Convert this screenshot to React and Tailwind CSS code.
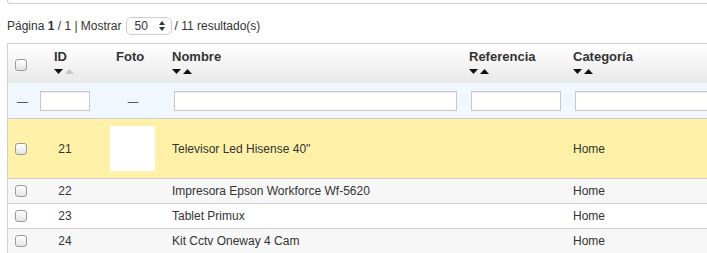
import React from "react";

const GRID = "grid grid-cols-[28px_62px_68px_297px_104px_240px]";

function Check() {
  return (
    <span className="block w-[12px] h-[12px] rounded-[3px] border border-[#9a9a9a] bg-gradient-to-b from-white to-[#e4e4e4] shadow-[inset_0_1px_0_#fff]" />
  );
}

function Arrows({ upLight }) {
  return (
    <svg width="22" height="5" viewBox="0 0 22 5" className="block">
      <polygon points="0,0 9,0 4.5,5" fill="#111" />
      <polygon points="11,5 20,5 15.5,0" fill={upLight ? "#c8c8c8" : "#111"} />
    </svg>
  );
}

function Head({ label, upLight, pl }) {
  return (
    <div className={`pt-[5px] ${pl}`}>
      <div className="font-bold text-[13px] leading-[15px] text-[#333]">{label}</div>
      <div className="mt-[5px]">
        <Arrows upLight={upLight} />
      </div>
    </div>
  );
}

function Input({ w }) {
  return (
    <div className={`h-[20px] ${w} bg-white border border-[#c8c8c8] shadow-[inset_0_1px_1px_rgba(0,0,0,0.08)]`} />
  );
}

const rows = [
  { id: 22, name: "Impresora Epson Workforce Wf-5620", bg: "bg-[#f7f7f7]" },
  { id: 23, name: "Tablet Primux", bg: "bg-white" },
  { id: 24, name: "Kit Cctv Oneway 4 Cam", bg: "bg-[#f7f7f7]" },
];

export default function App() {
  return (
    <div
      className="w-[707px] h-[253px] overflow-hidden bg-white text-[#333] text-[12px]"
      style={{ fontFamily: '"Liberation Sans", Arial, sans-serif' }}
    >
      <div className="ml-[7px] h-[4px] border-l border-b border-[#cfcfcf] rounded-bl-[3px]" />
      <div className="ml-[7px] mt-[13px] h-[18px] flex items-center whitespace-nowrap">
        <span>
          Página <b>1</b> / 1 | Mostrar
        </span>
        <span className="ml-[4px] w-[46px] h-[18px] rounded-[5px] border border-[#cdcdcd] bg-white flex items-center pl-[8px] pr-[6px] justify-between">
          <span>50</span>
          <svg width="6" height="10" viewBox="0 0 6 10">
            <polygon points="0,4 6,4 3,0" fill="#333" />
            <polygon points="0,6 6,6 3,10" fill="#333" />
          </svg>
        </span>
        <span className="ml-[3px]">/ 11 resultado(s)</span>
      </div>

      <div className="ml-[7px] mt-[8px] w-[810px] border-l border-t border-[#cfcfcf]">
        {/* header */}
        <div className={`${GRID} h-[39px] bg-gradient-to-b from-white to-[#e9e9e9]`}>
          <div className="pl-[7px] pt-[15px]">
            <Check />
          </div>
          <Head label="ID" upLight pl="pl-[18px]" />
          <div className="pt-[5px] pl-[18px] font-bold text-[13px] leading-[15px]">Foto</div>
          <Head label="Nombre" pl="pl-[6px]" />
          <Head label="Referencia" pl="pl-[6px]" />
          <Head label="Categoría" pl="pl-[6px]" />
        </div>
        {/* filter */}
        <div className={`${GRID} h-[36px] bg-[#f0f7ff] border-b border-[#cfcfcf]`}>
          <div className="flex justify-center pt-[12px] pl-[1px] leading-[12px] text-[11px]">—</div>
          <div className="pl-[4px] pt-[8px]">
            <Input w="w-[50px]" />
          </div>
          <div className="flex justify-center pt-[12px] pl-[2px] leading-[12px] text-[11px]">—</div>
          <div className="pl-[8px] pt-[8px]">
            <Input w="w-[283px]" />
          </div>
          <div className="pl-[8px] pt-[8px]">
            <Input w="w-[90px]" />
          </div>
          <div className="pl-[8px] pt-[8px]">
            <Input w="w-[200px]" />
          </div>
        </div>
        {/* highlighted row */}
        <div className={`${GRID} h-[60px] bg-[#fff1a8] border-b border-[#cfcfcf] items-center`}>
          <div className="pl-[7px]">
            <Check />
          </div>
          <div className="text-center pr-[4px]">21</div>
          <div className="flex justify-center pl-[1px]">
            <div className="w-[45px] h-[45px] bg-white" />
          </div>
          <div className="pl-[6px]">Televisor Led Hisense 40"</div>
          <div />
          <div className="pl-[6px]">Home</div>
        </div>
        {rows.map((r) => (
          <div
            key={r.id}
            className={`${GRID} h-[25px] ${r.bg} border-b border-[#cfcfcf] items-center`}
          >
            <div className="pl-[7px]">
              <Check />
            </div>
            <div className="text-center pr-[4px]">{r.id}</div>
            <div />
            <div className="pl-[6px]">{r.name}</div>
            <div />
            <div className="pl-[6px]">Home</div>
          </div>
        ))}
      </div>
    </div>
  );
}
